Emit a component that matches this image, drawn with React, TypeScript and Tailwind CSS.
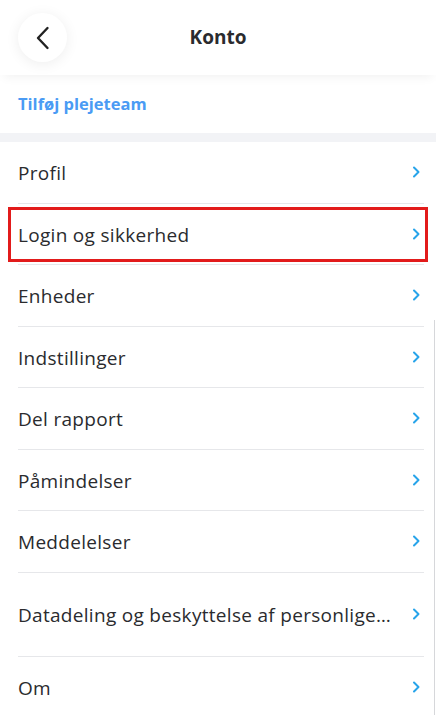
import React from "react";

const items: { label: string; tall?: boolean; highlighted?: boolean }[] = [
  { label: "Profil" },
  { label: "Login og sikkerhed", highlighted: true },
  { label: "Enheder" },
  { label: "Indstillinger" },
  { label: "Del rapport" },
  { label: "Påmindelser" },
  { label: "Meddelelser" },
  { label: "Datadeling og beskyttelse af personlige…", tall: true },
  { label: "Om" },
];

const Chevron = () => (
  <svg width="8" height="12" viewBox="0 0 8 12" fill="none">
    <path d="M2 1.5 6.5 6 2 10.5" stroke="#27a4ea" strokeWidth="2" strokeLinecap="round" strokeLinejoin="round" />
  </svg>
);

const App: React.FC = () => {
  return (
    <div
      className="relative w-[436px] h-[715px] overflow-hidden bg-white text-[#2a2b2e]"
      style={{ fontFamily: "'Open Sans', 'Noto Sans', sans-serif" }}
    >
      {/* header */}
      <div className="relative z-10 h-[75px] flex items-center px-[18px] bg-white shadow-[0_6px_10px_-4px_rgba(0,0,0,0.06)]">
        <button className="w-[49px] h-[49px] rounded-full bg-white shadow-[0_2px_14px_rgba(0,0,0,0.07)] flex items-center justify-center">
          <svg width="14" height="24" viewBox="0 0 14 24" fill="none">
            <path d="M11.5 2 2 12l9.5 10" stroke="#222" strokeWidth="2.4" strokeLinecap="round" strokeLinejoin="round" />
          </svg>
        </button>
        <h1 className="absolute left-0 right-0 text-center text-[19px] font-bold pointer-events-none">Konto</h1>
      </div>

      <div className="h-[58px] flex items-center px-[18px]">
        <span className="text-[16.5px] font-bold text-[#4a9bf4]">Tilføj plejeteam</span>
      </div>
      <div className="h-[9px] bg-[#f2f3f6]" />

      <ul className="pl-[18px] pr-[12px]">
        {items.map((item, i) => (
          <li
            key={item.label}
            className={`relative flex items-center justify-between ${item.tall ? "h-[84px]" : "h-[61.5px]"} ${
              i < items.length - 1 ? "border-b border-[#e6e7ea]" : ""
            }`}
          >
            <span className="text-[19px] tracking-[0.3px] whitespace-nowrap pt-[2px]">{item.label}</span>
            <span className="shrink-0 pr-[4px]">
              <Chevron />
            </span>
            {item.highlighted && (
              <div className="absolute -left-[10px] -right-[4px] top-[3px] bottom-[2px] border-[3px] border-[#e21b1b]" />
            )}
          </li>
        ))}
      </ul>

      {/* scroll indicator */}
      <div className="absolute right-[1px] top-[320px] bottom-0 w-px bg-[#d6d7da]" />
    </div>
  );
};

export default App;
